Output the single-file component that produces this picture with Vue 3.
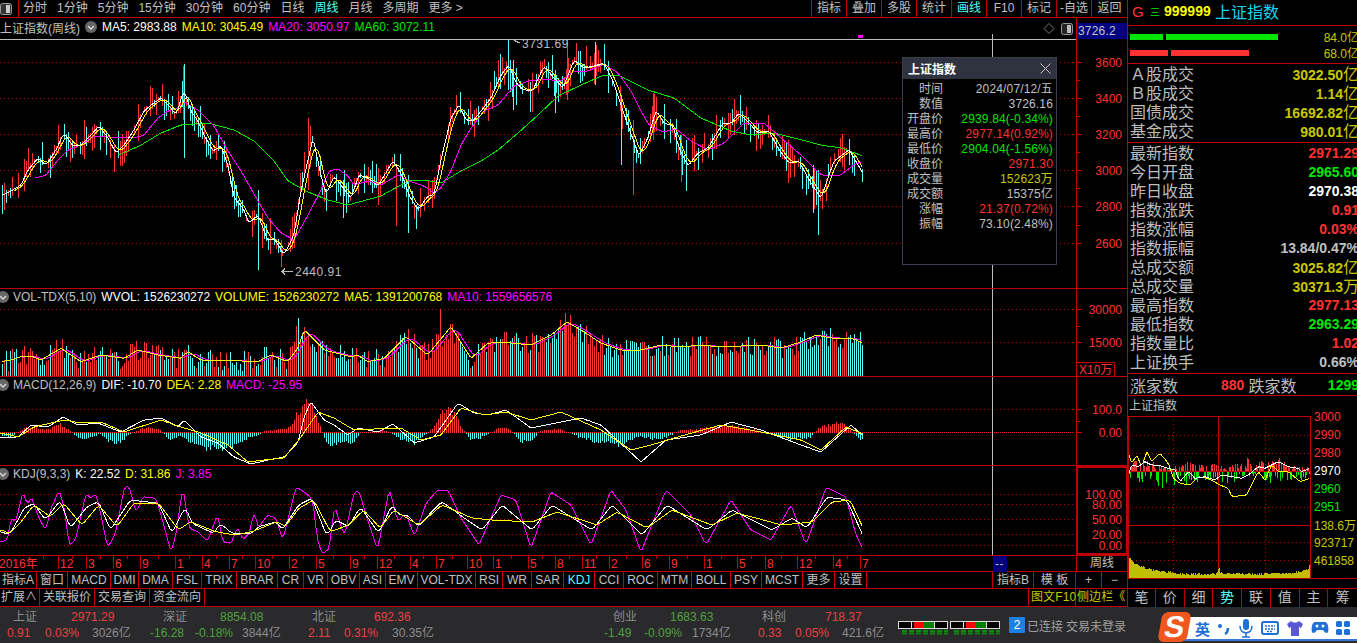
<template>
  <div class="screen">
    <div class="workspace">
      <!-- left: toolbar, chart panes, tabs -->
      <section class="left">
        <div class="toolbar">
          <div class="tool-icon">
            <svg width="12" height="12" viewBox="0 0 12 12"><rect x="0.5" y="0.5" width="11" height="11" rx="2" fill="#333" stroke="#999" /><rect x="6" y="2" width="4" height="8" fill="#ccc" /></svg>
          </div>
          <div class="periods">
            <span v-for="p in periods" :key="p" :class="{ on: p === '周线' }">{{ p }}</span>
          </div>
          <div class="tool-cells">
            <span v-for="t in tools" :key="t" :class="{ on: t === '画线' }">{{ t }}</span>
          </div>
        </div>

        <div class="pane main-pane">
          <svg class="chart" width="1127" height="270" viewBox="0 18 1127 270">
            <path v-for="y in [62, 98, 134, 170, 206, 243]" :key="y" class="dots" :d="`M0 ${y + 0.5}H1074`" />
            <path class="rule" d="M0 39.5H1076" />
            <path class="rule" d="M992.5 34V288" />
            <path class="wick-red" :d="candles.red" />
            <path class="wick-cyan" :d="candles.cyan" />
            <polyline class="ln green" :points="ma60Line" />
            <polyline class="ln magenta" :points="ma20Line" />
            <polyline class="ln yellow" :points="ma10Line" />
            <polyline class="ln white" :points="ma5Line" />
            <rect x="858" y="35" width="5" height="3" fill="#ff00ff" />
            <path class="arrow" d="M293 271.5H282M285 268.5L282 271.5L285 274.5" />
            <text class="note" x="295" y="276">2440.91</text>
            <path class="arrow" d="M520 43L514 40.5M514 40.5L517 39.5" />
            <text class="note" x="522" y="48">3731.69</text>
            <path class="frame" d="M1076.5 18V288M1076 62.5H1082M1076 80.5H1080M1076 98.5H1082M1076 116.5H1080M1076 134.5H1082M1076 152.5H1080M1076 170.5H1082M1076 188.5H1080M1076 206.5H1082M1076 225.5H1080M1076 243.5H1082" />
            <text v-for="l in priceAxis" :key="l.t" class="axis" x="1122" :y="l.y + 4.5">{{ l.t }}</text>
            <path d="M1049 23.5L1054 28.5L1049 33.5L1044 28.5Z" fill="none" stroke="#777" />
            <rect x="1061.5" y="23.5" width="11" height="11" rx="2" fill="#222" stroke="#999" />
            <rect x="1067" y="25" width="4" height="8" fill="#bbb" />
          </svg>
          <div class="legend main-legend">
            <span class="gray">上证指数(周线)</span>
            <svg class="fold" width="12" height="12" viewBox="0 0 12 12"><circle cx="6" cy="6" r="6" fill="#666" /><path d="M3 5L6 8L9 5" fill="none" stroke="#ddd" stroke-width="1.3" /></svg>
            <span class="c-white">MA5: 2983.88</span>
            <span class="c-yellow">MA10: 3045.49</span>
            <span class="c-magenta">MA20: 3050.97</span>
            <span class="c-green">MA60: 3072.11</span>
          </div>
          <div class="price-tag">3726.2</div>

          <div class="tip">
            <div class="tip-head">
              <b>上证指数</b>
              <svg width="11" height="11" viewBox="0 0 11 11"><path d="M0.5 0.5L10.5 10.5M10.5 0.5L0.5 10.5" stroke="#d8b8b8" fill="none" /></svg>
            </div>
            <div class="tip-body">
              <div v-for="r in tipRows" :key="r.k" class="tip-row">
                <span class="tip-k">{{ r.k }}</span>
                <span :class="['tip-v', r.c]">{{ r.v }}</span>
              </div>
            </div>
          </div>
        </div>

        <div class="pane vol-pane">
          <svg class="chart" width="1127" height="87" viewBox="0 289 1127 87">
            <path class="dots" d="M0 309.5H1074M0 342.5H1074" />
            <path class="rule" d="M992.5 289V376" />
            <path class="wick-red" :d="volBars.red" />
            <path class="wick-cyan" :d="volBars.cyan" />
            <polyline class="ln magenta" :points="volMa10" />
            <polyline class="ln yellow" :points="volMa5" />
            <path class="frame" d="M1076.5 289V376M1076 309.5H1082M1076 326.5H1080M1076 342.5H1082" />
            <text class="axis" x="1122" y="314">30000</text>
            <text class="axis" x="1122" y="347">15000</text>
            <rect class="frame" x="1076.5" y="362.5" width="38" height="14" />
            <text class="axis" x="1079" y="374" text-anchor="start">X10万</text>
          </svg>
          <div class="legend sub-legend">
            <svg class="fold" width="12" height="12" viewBox="0 0 12 12"><circle cx="6" cy="6" r="6" fill="#666" /><path d="M3 5L6 8L9 5" fill="none" stroke="#ddd" stroke-width="1.3" /></svg>
            <span class="gray">VOL-TDX(5,10)</span>
            <span class="c-white">WVOL: 1526230272</span>
            <span class="c-yellow">VOLUME: 1526230272</span>
            <span class="c-yellow">MA5: 1391200768</span>
            <span class="c-magenta">MA10: 1559656576</span>
          </div>
        </div>

        <div class="pane macd-pane">
          <svg class="chart" width="1127" height="88" viewBox="0 377 1127 88">
            <path class="dots" d="M0 409.5H1074" />
            <path class="dots bright" d="M0 432.5H1074" />
            <path class="rule" d="M992.5 377V465" />
            <path class="wick-red" :d="macdBars.red" />
            <path class="wick-cyan" :d="macdBars.cyan" />
            <polyline class="ln white" :points="difLine" />
            <polyline class="ln yellow" :points="deaLine" />
            <path class="frame" d="M1076.5 377V465M1076 409.5H1082M1076 421.5H1080M1076 432.5H1082" />
            <text class="axis" x="1122" y="414">100.0</text>
            <text class="axis" x="1122" y="437">0.00</text>
          </svg>
          <div class="legend sub-legend">
            <svg class="fold" width="12" height="12" viewBox="0 0 12 12"><circle cx="6" cy="6" r="6" fill="#666" /><path d="M3 5L6 8L9 5" fill="none" stroke="#ddd" stroke-width="1.3" /></svg>
            <span class="gray">MACD(12,26,9)</span>
            <span class="c-white">DIF: -10.70</span>
            <span class="c-yellow">DEA: 2.28</span>
            <span class="c-magenta">MACD: -25.95</span>
          </div>
        </div>

        <div class="pane kdj-pane">
          <svg class="chart" width="1127" height="89" viewBox="0 466 1127 89">
            <path class="dots" d="M0 494.5H1074M0 504.5H1074M0 519.5H1074M0 534.5H1074M0 545.5H1074" />
            <path class="rule" d="M992.5 466V555" />
            <polyline class="ln magenta" :points="jLine" />
            <polyline class="ln white" :points="kLine" />
            <polyline class="ln yellow" :points="dLine" />
            <rect x="1077" y="467" width="50" height="87" fill="none" stroke="#c00000" stroke-width="2" />
            <text class="axis" x="1122" y="498.5">100.00</text>
            <text class="axis" x="1122" y="509">80.00</text>
            <text class="axis" x="1122" y="524">50.00</text>
            <text class="axis" x="1122" y="539">20.00</text>
            <text class="axis" x="1122" y="549.5">0.00</text>
          </svg>
          <div class="legend sub-legend">
            <svg class="fold" width="12" height="12" viewBox="0 0 12 12"><circle cx="6" cy="6" r="6" fill="#666" /><path d="M3 5L6 8L9 5" fill="none" stroke="#ddd" stroke-width="1.3" /></svg>
            <span class="gray">KDJ(9,3,3)</span>
            <span class="c-white">K: 22.52</span>
            <span class="c-yellow">D: 31.86</span>
            <span class="c-magenta">J: 3.85</span>
          </div>
        </div>

        <div class="time-row">
          <svg width="1076" height="16" viewBox="0 556 1076 16">
            <path class="frame" :d="timeTicks" />
            <text class="axis" x="-1" y="568" text-anchor="start">2016年</text>
            <text v-for="m in months" :key="m[1]" class="axis" :x="m[1] + 2" y="568" text-anchor="start">{{ m[0] }}</text>
            <rect x="993" y="556" width="14" height="16" fill="#000080" />
            <text class="note" x="995" y="568">--</text>
          </svg>
          <span class="cycle">周线</span>
        </div>

        <div class="tab-row">
          <span v-for="t in tabs" :key="t.n" :class="{ on: t.n === 'KDJ' }" :style="{ width: t.w + 'px' }">{{ t.n }}</span>
          <i class="tab-gap"></i>
          <span class="tab-b">指标B</span>
          <span class="tab-m">模 板</span>
          <span class="tab-p">+</span>
          <span class="tab-l">−</span>
        </div>

        <div class="ext-row">
          <span>扩展∧</span>
          <span>关联报价</span>
          <span>交易查询</span>
          <span>资金流向</span>
          <i class="tab-gap"></i>
          <span class="olive">图文F10</span>
          <span class="olive side">侧边栏《</span>
        </div>
      </section>

      <!-- right: quote panel -->
      <aside class="right">
        <div class="q-head">
          <span class="q-g">G</span>
          <span class="q-bars">三</span>
          <b>999999</b>
          <span class="q-name">上证指数</span>
        </div>
        <div class="q-flow">
          <div class="flow-line">
            <i class="bar g1"></i><i class="bar g2"></i><span>84.0亿</span>
          </div>
          <div class="flow-line">
            <i class="bar r1"></i><i class="bar r2"></i><span>68.0亿</span>
          </div>
        </div>
        <div class="q-block first">
          <div v-for="r in amountRows" :key="r.k" class="q-row">
            <span>{{ r.k }}</span><b class="c-olive">{{ r.v }}<em>亿</em></b>
          </div>
        </div>
        <div class="q-block list">
          <div v-for="r in quoteRows" :key="r.k" class="q-row">
            <span>{{ r.k }}</span><b :class="r.c">{{ r.v }}<em v-if="r.u">{{ r.u }}</em></b>
          </div>
        </div>
        <div class="q-count">
          <span>涨家数</span><b class="c-red">880</b><span>跌家数</span><b class="c-green">1299</b>
        </div>
        <div class="q-title">上证指数</div>
        <svg class="mini" width="229" height="173" viewBox="1128 416 229 173">
          <path class="dots" d="M1128 435.5H1310M1128 453.5H1310M1128 489.5H1310M1128 507.5H1310M1128 542.5H1310M1128 560.5H1310M1173.5 416V578M1265.5 416V578" />
          <path class="frame" d="M1128 471.5H1310M1128 525.5H1310M1218.5 416V578" />
          <path class="wick-red" stroke="#ff3232" :d="mini.red" />
          <path class="wick-green" stroke="#00e600" :d="mini.green" />
          <path class="wick-olive" :d="mini.vol" />
          <polyline class="ln yellow" :points="mini.avg" />
          <polyline class="ln white" :points="mini.price" />
          <path class="frame" d="M1128.5 416.5H1310.5V578.5H1128.5ZM1310 578.5H1357M1128 588.5H1357" />
          <text v-for="l in miniAxis" :key="l.t" :class="['mini-label', l.c]" x="1314" :y="l.y + 5">{{ l.t }}</text>
        </svg>
        <div class="q-tabs">
          <span v-for="t in sideTabs" :key="t" :class="{ on: t === '势' }">{{ t }}</span>
        </div>
      </aside>
    </div>

    <!-- bottom status strip -->
    <footer class="status">
      <div class="quotes">
        <div class="quote-line" :style="{ paddingLeft: '13px' }">
          <span v-for="q in statusTop" :key="q.x" :class="q.c" :style="{ width: q.w + 'px' }">{{ q.t }}</span>
        </div>
        <div class="quote-line" :style="{ paddingLeft: '7px' }">
          <span v-for="q in statusBottom" :key="q.x" :class="q.c" :style="{ width: q.w + 'px' }">{{ q.t }}</span>
        </div>
      </div>
      <svg class="meter" width="103" height="14" viewBox="0 0 103 14">
        <g v-for="o in [0, 52]" :key="o" :transform="`translate(${o} 0)`">
          <rect x="0.5" y="0.5" width="49" height="7" fill="#000" stroke="#ddd" />
          <rect x="16" y="1" width="9" height="6" fill="#ff0000" />
          <rect x="25" y="1" width="11" height="6" fill="#008000" />
          <path d="M13.5 0V7M36.5 0V7" stroke="#ddd" />
          <path d="M4 10H50M4 12.5H50" stroke="#0a8a0a" stroke-width="2" stroke-dasharray="5 2" />
        </g>
      </svg>
      <span class="net-badge">2</span>
      <span class="net-text">已连接</span>
      <span class="net-text login">交易未登录</span>
    </footer>

    <!-- input method bar floats over the status strip -->
    <div class="ime">
      <div class="ime-logo"><span>S</span></div>
      <div class="ime-bar">
        <b class="ime-zh">英</b>
        <svg width="14" height="16" viewBox="0 0 14 16"><circle cx="3" cy="6" r="2" fill="#1f6fd6" /><path d="M11 8C11 11 10 13 8 14" stroke="#1f6fd6" stroke-width="2.4" fill="none" /></svg>
        <svg width="16" height="20" viewBox="0 0 16 20"><rect x="5" y="1" width="6" height="11" rx="3" fill="#1f6fd6" /><path d="M2 8C2 17 14 17 14 8M8 15V19M4 19H12" stroke="#1f6fd6" stroke-width="1.6" fill="none" /></svg>
        <svg width="18" height="14" viewBox="0 0 18 14"><rect x="1" y="1" width="16" height="12" rx="2" fill="none" stroke="#1f6fd6" stroke-width="2" /><path d="M4 5H14M4 8H14M6 10.5H12" stroke="#1f6fd6" stroke-width="1.5" stroke-dasharray="2 1" /></svg>
        <svg width="18" height="17" viewBox="0 0 18 17"><path d="M5 1L1 4L3 8L5 7V16H13V7L15 8L17 4L13 1C11 3 7 3 5 1Z" fill="#5b57d6" /></svg>
        <svg width="18" height="14" viewBox="0 0 18 14"><path d="M4 1H14C17 1 18 8 17 11C16 13 14 12 12 9H6C4 12 2 13 1 11C0 8 1 1 4 1Z" fill="#1f6fd6" /><circle cx="6" cy="5" r="1.5" fill="#fff" /><circle cx="12" cy="5" r="1.5" fill="#fff" /></svg>
        <svg width="14" height="14" viewBox="0 0 14 14"><rect width="6" height="6" rx="1.5" fill="#1f6fd6" /><rect x="8" width="6" height="6" rx="1.5" fill="#1f6fd6" /><rect y="8" width="6" height="6" rx="1.5" fill="#1f6fd6" /><rect x="8" y="8" width="6" height="6" rx="1.5" fill="#1f6fd6" /></svg>
      </div>
    </div>
  </div>
</template>

<script setup>
const periods = ["分时", "1分钟", "5分钟", "15分钟", "30分钟", "60分钟", "日线", "周线", "月线", "多周期", "更多 >"];
const tools = ["指标", "叠加", "多股", "统计", "画线", "F10", "标记", "-自选", "返回"];
const sideTabs = ["笔", "价", "细", "势", "联", "值", "主", "筹"];

const priceAxis = [
  { t: "3600", y: 62 }, { t: "3400", y: 98 }, { t: "3200", y: 134 },
  { t: "3000", y: 170 }, { t: "2800", y: 206 }, { t: "2600", y: 243 }
];
const miniAxis = [
  { t: "3000", y: 416, c: "c-red" }, { t: "2990", y: 434, c: "c-red" }, { t: "2980", y: 452, c: "c-red" },
  { t: "2970", y: 470, c: "c-white" }, { t: "2960", y: 488, c: "c-green" }, { t: "2951", y: 506, c: "c-green" },
  { t: "138.6万", y: 525, c: "c-olive" }, { t: "923717", y: 542, c: "c-olive" }, { t: "461858", y: 560, c: "c-olive" }
];

const tipRows = [
  { k: "时间", v: "2024/07/12/五", c: "gray" },
  { k: "数值", v: "3726.16", c: "gray" },
  { k: "开盘价", v: "2939.84(-0.34%)", c: "c-green" },
  { k: "最高价", v: "2977.14(0.92%)", c: "c-red" },
  { k: "最低价", v: "2904.04(-1.56%)", c: "c-green" },
  { k: "收盘价", v: "2971.30", c: "c-red" },
  { k: "成交量", v: "152623万", c: "c-olive" },
  { k: "成交额", v: "15375亿", c: "gray" },
  { k: "涨幅", v: "21.37(0.72%)", c: "c-red" },
  { k: "振幅", v: "73.10(2.48%)", c: "gray" }
];

const amountRows = [
  { k: "Ａ股成交", v: "3022.50" }, { k: "Ｂ股成交", v: "1.14" },
  { k: "国债成交", v: "16692.82" }, { k: "基金成交", v: "980.01" }
];
const quoteRows = [
  { k: "最新指数", v: "2971.29", c: "c-red" },
  { k: "今日开盘", v: "2965.60", c: "c-green" },
  { k: "昨日收盘", v: "2970.38", c: "c-white" },
  { k: "指数涨跌", v: "0.91", c: "c-red" },
  { k: "指数涨幅", v: "0.03%", c: "c-red" },
  { k: "指数振幅", v: "13.84/0.47%", c: "gray" },
  { k: "总成交额", v: "3025.82", u: "亿", c: "c-olive" },
  { k: "总成交量", v: "30371.3", u: "万", c: "c-olive" },
  { k: "最高指数", v: "2977.13", c: "c-red" },
  { k: "最低指数", v: "2963.29", c: "c-green" },
  { k: "指数量比", v: "1.02", c: "c-red" },
  { k: "上证换手", v: "0.66%", c: "gray" }
];

// tab cells, from their right edges
const tabEdges = [
  ["指标A", 37], ["窗口", 68], ["MACD", 111], ["DMI", 139], ["DMA", 173], ["FSL", 202], ["TRIX", 237],
  ["BRAR", 278], ["CR", 304], ["VR", 328], ["OBV", 360], ["ASI", 386], ["EMV", 418], ["VOL-TDX", 476],
  ["RSI", 503], ["WR", 532], ["SAR", 564], ["KDJ", 595], ["CCI", 624], ["ROC", 658], ["MTM", 692],
  ["BOLL", 731], ["PSY", 762], ["MCST", 803], ["更多", 835], ["设置", 867]
];
const tabs = tabEdges.map(([n, end], i) => ({ n, w: end - (i ? tabEdges[i - 1][1] : 0) }));

const months = [
  ["12", 58], ["3", 86], ["6", 113], ["9", 140], ["1", 175], ["4", 202], ["7", 229], ["10", 255], ["2", 289],
  ["5", 316], ["9", 350], ["12", 377], ["4", 410], ["7", 436], ["10", 467], ["1", 493], ["5", 528], ["8", 555],
  ["11", 582], ["2", 609], ["6", 642], ["9", 669], ["1", 704], ["5", 737], ["8", 765], ["12", 797], ["4", 833], ["7", 860]
];
const timeTicks = months
  .map(([, x], i) => {
    const prev = i ? months[i - 1][1] : 28;
    return `M${x + 0.5} 556V569M${Math.round((x + prev) / 2) + 0.5} 556V559`;
  })
  .join("");

// status strip columns: text and left x, cell width runs to the next x
function statusCells(list) {
  return list.map((q, i) => ({
    ...q,
    w: (i + 1 < list.length ? list[i + 1].x : q.x + 50) - q.x
  }));
}
const statusTop = statusCells([
  { x: 13, t: "上证", c: "s-name" }, { x: 71, t: "2971.29", c: "s-up" },
  { x: 163, t: "深证", c: "s-name" }, { x: 220, t: "8854.08", c: "s-down" },
  { x: 312, t: "北证", c: "s-name" }, { x: 374, t: "692.36", c: "s-up" },
  { x: 613, t: "创业", c: "s-name" }, { x: 670, t: "1683.63", c: "s-down" },
  { x: 762, t: "科创", c: "s-name" }, { x: 825, t: "718.37", c: "s-up" }
]);
const statusBottom = statusCells([
  { x: 7, t: "0.91", c: "s-up" }, { x: 45, t: "0.03%", c: "s-up" }, { x: 92, t: "3026亿", c: "s-name" },
  { x: 150, t: "-16.28", c: "s-down" }, { x: 195, t: "-0.18%", c: "s-down" }, { x: 242, t: "3844亿", c: "s-name" },
  { x: 308, t: "2.11", c: "s-up" }, { x: 344, t: "0.31%", c: "s-up" }, { x: 392, t: "30.35亿", c: "s-name" },
  { x: 604, t: "-1.49", c: "s-down" }, { x: 644, t: "-0.09%", c: "s-down" }, { x: 692, t: "1734亿", c: "s-name" },
  { x: 758, t: "0.33", c: "s-up" }, { x: 795, t: "0.05%", c: "s-up" }, { x: 842, t: "421.6亿", c: "s-name" }
]);

/* ---------- chart data, traced from the weekly chart ---------- */
function at(pts, x) {
  if (x <= pts[0][0]) return pts[0][1];
  for (let i = 1; i < pts.length; i++) {
    if (x <= pts[i][0]) {
      const [x0, y0] = pts[i - 1];
      const [x1, y1] = pts[i];
      return y0 + ((y1 - y0) * (x - x0)) / (x1 - x0);
    }
  }
  return pts[pts.length - 1][1];
}

function random(seed) {
  return () => (seed = (seed * 16807) % 2147483647) / 2147483647;
}

// trailing average
function trail(arr, n) {
  return arr.map((_, i) => {
    const s = arr.slice(Math.max(0, i - n + 1), i + 1);
    return s.reduce((a, b) => a + b, 0) / s.length;
  });
}

function line(pts, from, to, smooth = 1) {
  const xs = [];
  for (let x = from; x <= to; x += 2) xs.push(x);
  const ys = trail(xs.map(x => at(pts, x)), smooth);
  return xs.map((x, i) => `${x},${ys[i].toFixed(1)}`).join(" ");
}

// points given in 3x zoom pixels
const z3 = (pts, ox, oy) => pts.map(([x, y]) => [x / 3 + ox, y / 3 + oy]);

const ma5 = [
  [2, 195], [10, 191], [20, 185], [27, 170], [37, 158], [45, 165], [55, 150], [63, 133], [72, 146], [80, 145], [90, 135],
  [98, 126], [107, 138], [115, 153], [123, 145], [133, 130], [143, 111], [150, 105], [160, 98], [170, 108], [175, 115],
  [183, 90], [190, 111], [197, 121], [203, 135], [212, 151], [220, 146], [227, 165], [233, 198], [242, 208], [248, 223],
  [257, 215], [267, 241], [273, 238], [283, 255], [293, 235], [300, 191], [312, 138], [320, 175], [325, 195], [333, 176],
  [350, 198], [358, 175], [367, 178], [377, 186], [392, 161], [400, 173], [408, 195], [417, 210], [427, 196], [433, 195],
  [440, 160], [450, 118], [458, 105], [465, 120], [472, 121], [480, 111], [490, 98], [500, 75], [508, 65], [515, 83],
  [523, 90], [532, 90], [543, 66], [553, 78], [562, 88], [573, 60], [583, 68], [593, 66], [603, 63], [612, 81], [620, 105],
  [628, 128], [638, 156], [647, 138], [655, 110], [663, 123], [672, 126], [678, 148], [687, 166], [697, 153], [707, 148],
  [722, 123], [730, 123], [738, 113], [748, 123], [757, 133], [768, 131], [777, 148], [788, 163], [798, 161], [807, 178],
  [820, 198], [833, 161], [848, 150], [862, 173]
];
const ma20 = [
  [35, 178], [45, 175], [57, 160], [67, 150], [80, 145], [93, 136], [107, 137], [133, 138], [143, 135], [157, 118],
  [167, 111], [177, 108], [183, 102], [197, 110], [213, 126], [227, 151], [240, 171], [257, 201], [267, 218], [280, 233],
  [293, 240], [307, 215], [320, 190], [328, 171], [337, 169], [347, 176], [353, 185], [367, 181], [380, 185], [397, 175],
  [408, 181], [423, 186], [433, 193], [440, 188], [450, 171], [460, 145], [470, 128], [483, 111], [497, 105], [513, 86],
  [528, 81], [543, 79], [560, 81], [573, 71], [587, 71], [603, 64], [617, 73], [630, 91], [640, 111], [648, 125], [662, 132],
  [675, 129], [690, 141], [707, 150], [723, 143], [743, 123], [763, 123], [780, 138], [800, 155], [820, 175], [838, 176],
  [853, 165], [862, 161]
];
const ma60 = [
  [118, 155], [140, 145], [160, 133], [180, 125], [207, 123], [233, 130], [253, 141], [273, 161], [287, 181], [307, 192],
  [327, 200], [347, 205], [380, 196], [407, 181], [423, 180], [440, 183], [460, 171], [480, 161], [497, 150], [517, 133],
  [537, 115], [557, 96], [580, 85], [603, 75], [617, 75], [647, 90], [673, 98], [700, 118], [730, 131], [750, 135], [773, 133],
  [793, 138], [820, 145], [840, 148], [862, 156]
];

const closeX = [];
for (let x = 2; x <= 862; x += 2) closeX.push(x);
const closes = closeX.map(x => at(ma5, x));

const ma5Line = line(ma5, 2, 862, 2);
const ma10Line = trail(closes, 5)
  .map((y, i) => `${closeX[i]},${y.toFixed(1)}`)
  .slice(6)
  .join(" ");
const ma20Line = line(ma20, 35, 862, 2);
const ma60Line = line(ma60, 118, 862, 2);

// long wicks that stand out in the picture: x, top, bottom, red?
const spikes = [
  [183, 66, 120, 1], [184, 64, 158, 0], [258, 190, 270, 0], [281, 240, 267, 1], [308, 118, 190, 1], [396, 170, 226, 1],
  [408, 175, 233, 0], [343, 180, 218, 0], [508, 40, 90, 0], [567, 40, 100, 1], [595, 42, 85, 0], [555, 70, 113, 0],
  [513, 60, 110, 0], [621, 95, 165, 0], [633, 120, 195, 1], [686, 140, 191, 0], [681, 135, 182, 1], [818, 170, 235, 0],
  [813, 165, 213, 0], [740, 95, 125, 0], [734, 99, 125, 1], [653, 93, 140, 1], [788, 140, 183, 1], [849, 139, 165, 0]
];

const rnd = random(7741);
const rising = closes.map((y, i) => {
  const up = i === 0 || y <= closes[i - 1];
  return rnd() < 0.22 ? !up : up;
});

const candles = { red: "", cyan: "" };
closeX.forEach((x, i) => {
  const a = rnd();
  const b = rnd();
  const top = closes[i] - 2 - a * a * 20;
  const bottom = closes[i] + 2 + b * b * 20;
  // thin the wicks out a bit, the white MA5 stays readable
  if (rnd() < 0.8) candles[rising[i] ? "red" : "cyan"] += `M${x + 0.5} ${top.toFixed(0)}V${bottom.toFixed(0)}`;
});
for (const [x, top, bottom, red] of spikes) {
  candles[red ? "red" : "cyan"] += `M${x + 0.5} ${top}V${bottom}`;
}

// volume
const vol5 = [
  ...z3([[0, 245], [30, 240], [60, 230], [90, 228], [120, 240], [180, 205], [210, 225], [240, 245], [300, 225], [370, 235], [410, 210],
    [470, 225], [540, 235], [560, 215], [600, 240], [700, 242], [770, 245], [810, 225], [860, 245], [890, 205], [910, 150], [930, 170],
    [970, 210], [1050, 230], [1070, 225], [1100, 245], [1150, 235], [1215, 170], [1280, 225], [1350, 140], [1410, 235], [1460, 190]], 0, 280),
  [500, 342], [530, 345], [550, 335], [566, 322], [580, 330], [600, 343], [620, 350], [640, 350], [660, 345], [680, 347], [700, 345],
  [720, 347], [740, 346], [760, 345], [780, 348], [800, 342], [815, 335], [830, 338], [850, 338], [862, 343]
];
const volMa5 = line(vol5, 2, 862, 2);
const volMa10 = trail(closeX.map(x => at(vol5, x)), 6)
  .map((y, i) => `${closeX[i]},${y.toFixed(1)}`)
  .slice(10)
  .join(" ");

const volBars = { red: "", cyan: "" };
closeX.forEach((x, i) => {
  const top = Math.min(at(vol5, x) + (rnd() - 0.5) * 22, 372);
  // past the 2021 top the bars are mostly cyan
  const red = rising[i] && !(x > 620 && rnd() < 0.45);
  volBars[red ? "red" : "cyan"] += `M${x + 0.5} ${top.toFixed(0)}V376`;
});
volBars.cyan += "M298.5 318V376";
volBars.red += "M296.5 326V376M440.5 309V376M565.5 313V376";

// MACD
const difPts = [
  [0, 437], [17, 437], [30, 425], [47, 427], [62, 417], [77, 425], [97, 423], [120, 432], [143, 420], [160, 418], [177, 427], [183, 420],
  [200, 437], [217, 443], [233, 457], [250, 464], [267, 460], [283, 457], [297, 443], [303, 417], [310, 402], [323, 420], [333, 425],
  [347, 435], [357, 428], [377, 432], [392, 424], [407, 437], [413, 443], [433, 437], [443, 423], [457, 403], [473, 413], [487, 415],
  [505, 410], [530, 428], [580, 418], [600, 425], [640, 462], [665, 440], [700, 435], [730, 422], [760, 430], [800, 445], [820, 452],
  [850, 425], [862, 436]
];
const deaPts = [
  [0, 433], [17, 437], [33, 427], [63, 420], [80, 423], [100, 422], [123, 432], [160, 420], [180, 427], [200, 433], [227, 445], [247, 462],
  [263, 460], [283, 458], [300, 437], [317, 412], [333, 418], [353, 430], [373, 429], [400, 428], [420, 440], [440, 435], [460, 408],
  [483, 415], [505, 412], [530, 420], [560, 412], [600, 430], [630, 450], [650, 445], [680, 436], [720, 425], [760, 432], [800, 440],
  [820, 450], [845, 427], [862, 434]
];
const difLine = line(difPts, 0, 862, 2);
const deaLine = line(deaPts, 0, 862, 2);

const histPts = [
  [0, -3], [10, -4], [20, 2], [30, 7], [45, 3], [60, 9], [70, 2], [75, -3], [85, -6], [100, -1], [110, -9], [118, -10], [130, -1], [145, 6],
  [160, 3], [170, -7], [180, -3], [190, -9], [205, -15], [230, -16], [245, -6], [258, -2], [265, 2], [285, 4], [293, 13], [303, 30], [310, 36],
  [316, 20], [322, 0], [327, -12], [340, -10], [352, -12], [360, 0], [385, 3], [400, -6], [413, -11], [425, -2], [435, 8], [445, 28], [455, 18],
  [462, 4], [470, -6], [480, -5], [490, 0], [500, 6], [510, 4], [520, -8], [530, -10], [540, 2], [560, 4], [580, -5], [600, -10], [620, -12],
  [640, -3], [660, -8], [680, 3], [700, 4], [730, 8], [760, 2], [790, -7], [810, -4], [820, 6], [840, 12], [855, -2], [862, -7]
];
const macdBars = { red: "", cyan: "" };
closeX.forEach(x => {
  const h = at(histPts, x) * (0.75 + rnd() * 0.45);
  if (h >= 0) macdBars.red += `M${x + 0.5} ${(433 - h).toFixed(0)}V433`;
  else macdBars.cyan += `M${x + 0.5} 433V${(433 - h).toFixed(0)}`;
});

// KDJ
const jPts = [
  ...z3([[0, 230], [20, 225], [30, 160], [45, 170], [65, 80], [80, 120], [92, 95], [110, 150], [125, 180], [135, 195], [150, 130], [175, 75], [190, 130],
    [205, 245], [225, 220], [255, 85], [270, 100], [285, 85], [300, 150], [320, 250], [345, 200], [370, 65], [385, 65], [405, 145], [425, 95],
    [465, 100], [480, 150], [510, 260], [525, 210], [545, 65], [565, 190], [590, 200], [620, 230], [650, 145], [665, 230], [690, 235], [710, 185],
    [725, 225], [745, 205], [760, 135], [770, 190], [800, 150], [825, 160], [845, 225], [885, 65], [915, 85], [935, 105], [950, 230], [965, 268],
    [985, 250], [1000, 120], [1030, 215], [1060, 80], [1075, 80], [1095, 150], [1130, 255], [1165, 70], [1190, 170], [1215, 145], [1240, 215],
    [1275, 115], [1310, 75]], 0, 465),
  [447, 490], [460, 518], [478, 545], [500, 495], [515, 500], [530, 548], [550, 492], [570, 505], [590, 545], [610, 490], [625, 510], [640, 552],
  [665, 490], [690, 515], [705, 545], [730, 500], [750, 530], [770, 540], [790, 505], [805, 545], [825, 487], [845, 497], [855, 535], [862, 549]
];
const kPts = [
  ...z3([[0, 200], [20, 210], [40, 180], [65, 130], [95, 115], [130, 165], [175, 105], [205, 190], [255, 125], [290, 110], [325, 195], [385, 105],
    [430, 110], [470, 115], [510, 205], [550, 125], [570, 175], [635, 205], [655, 175], [690, 205], [750, 205], [770, 185], [825, 170], [840, 195],
    [890, 120], [930, 100], [975, 215], [1000, 165], [1040, 185], [1075, 125], [1130, 205], [1170, 120], [1190, 150], [1215, 150], [1250, 185],
    [1280, 150], [1320, 110]], 0, 465),
  [465, 520], [480, 530], [500, 505], [530, 530], [550, 505], [590, 530], [610, 505], [640, 535], [665, 505], [705, 530], [730, 510], [770, 530],
  [790, 518], [805, 528], [825, 497], [845, 500], [862, 538]
];
const dPts = [
  ...z3([[0, 195], [20, 205], [50, 180], [95, 120], [145, 155], [185, 115], [240, 180], [290, 120], [345, 185], [395, 115], [470, 115], [530, 195],
    [565, 170], [640, 200], [700, 210], [750, 200], [825, 170], [850, 185], [890, 130], [935, 105], [985, 200], [1040, 180], [1085, 135], [1135, 190],
    [1175, 135], [1250, 180], [1320, 120]], 0, 465),
  [470, 518], [490, 520], [530, 522], [555, 512], [595, 525], [615, 512], [645, 528], [670, 510], [710, 525], [735, 513], [780, 525], [810, 522],
  [830, 502], [848, 500], [862, 530]
];
const jLine = line(jPts, 0, 862, 2);
const kLine = line(kPts, 0, 862, 3);
const dLine = line(dPts, 0, 862, 3);

// intraday mini chart
const miniPrice = z3([[10, 225], [20, 195], [40, 200], [60, 185], [80, 195], [100, 195], [130, 205], [150, 210], [165, 245], [190, 215], [210, 235], [240, 230],
  [270, 240], [290, 225], [320, 230], [350, 235], [370, 225], [400, 200], [420, 205], [460, 185], [490, 200], [520, 205], [530, 215], [555, 205]], 1125, 400);
const miniAvg = z3([[10, 160], [20, 190], [35, 165], [50, 200], [65, 155], [80, 185], [105, 160], [130, 190], [145, 235], [165, 250], [195, 255], [220, 230],
  [250, 235], [285, 255], [310, 265], [320, 290], [365, 285], [385, 245], [400, 215], [420, 240], [440, 195], [460, 215], [490, 215], [525, 245], [555, 235]], 1125, 400);
const miniUp = z3([[10, 30], [60, 36], [130, 9], [170, 27], [220, 30], [300, 15], [350, 24], [375, 54], [395, 39], [440, 30], [460, 45], [500, 18], [555, 12]], 1125, 0);
const miniDown = z3([[10, 15], [50, 45], [130, 54], [190, 36], [260, 27], [320, 36], [350, 24], [400, 9], [430, 36], [480, 36], [520, 30], [555, 9]], 1125, 0);
const miniVol = z3([[8, 385], [11, 385], [12, 470], [25, 490], [50, 500], [80, 510], [120, 515], [145, 518], [170, 522], [270, 522], [282, 505], [285, 520],
  [400, 522], [500, 520], [530, 513], [550, 508], [553, 483], [556, 483]], 1125, 400);

const mini = { red: "", green: "", vol: "" };
const rm = random(2201);
for (let x = 1129; x < 1310; x++) {
  rm();
  const r = rm();
  if (r < 0.5) mini.red += `M${x + 0.5} ${(471 - at(miniUp, x) * (0.25 + rm() * 0.75)).toFixed(0)}V471`;
  else mini.green += `M${x + 0.5} 472V${(472 + at(miniDown, x) * (0.25 + rm() * 0.75)).toFixed(0)}`;
}
for (let x = 1128; x < 1310; x++) {
  mini.vol += `M${x + 0.5} ${(at(miniVol, x) + rm() * 2 - 1).toFixed(0)}V578`;
}
const xyLine = pts => {
  let s = "";
  for (let x = Math.ceil(pts[0][0]); x <= 1310; x += 2) s += `${x},${at(pts, x).toFixed(1)} `;
  return s;
};
mini.price = xyLine(miniPrice);
mini.avg = xyLine(miniAvg);
</script>

<style scoped>
.screen {
  --line: #c00000;
  position: relative;
  width: 1357px;
  height: 643px;
  overflow: hidden;
  background: #000;
  color: #c0c0c0;
  font-family: "Liberation Sans", "Noto Sans CJK SC", sans-serif;
  font-size: 12px;
}
.workspace {
  display: flex;
  height: 607px;
}
.left {
  width: 1128px;
  flex: none;
  border-right: 1px solid var(--line);
  box-sizing: border-box;
}

/* colours */
.gray { color: #c0c0c0; }
.c-white { color: #fff; }
.c-yellow { color: #ffff00; }
.c-magenta { color: #ff00ff; }
.c-green { color: #00e600; }
.c-red { color: #ff3232; }
.c-olive { color: #c8c800; }

/* top toolbar */
.toolbar {
  display: flex;
  height: 18px;
  box-sizing: border-box;
  border-bottom: 1px solid var(--line);
  line-height: 17px;
}
.tool-icon {
  width: 19px;
  flex: none;
  box-sizing: border-box;
  border-right: 1px solid var(--line);
  display: flex;
  align-items: center;
}
.periods {
  display: flex;
  gap: 10px;
  padding-left: 4px;
  white-space: nowrap;
}
.on { color: #54ffff !important; }
.tool-cells {
  display: flex;
  margin-left: auto;
}
.tool-cells span {
  width: 35px;
  box-sizing: border-box;
  border-left: 1px solid var(--line);
  text-align: center;
}
.tool-cells span:last-child { width: 36px; }

/* chart panes */
.pane {
  position: relative;
  box-sizing: border-box;
  border-bottom: 1px solid var(--line);
}
.main-pane { height: 271px; }
.vol-pane { height: 88px; }
.macd-pane { height: 89px; }
.kdj-pane { height: 90px; }
.chart {
  display: block;
  overflow: hidden;
}
.dots {
  fill: none;
  stroke: #c00000;
  stroke-dasharray: 1 3;
  shape-rendering: crispEdges;
}
.dots.bright { stroke: #ff2020; stroke-dasharray: 1 1; }
.rule {
  stroke: #bdbdbd;
  fill: none;
  shape-rendering: crispEdges;
}
.frame {
  fill: none;
  stroke: var(--line);
  shape-rendering: crispEdges;
}
.wick-red, .wick-cyan, .wick-green, .wick-olive {
  fill: none;
  shape-rendering: crispEdges;
}
.wick-red { stroke: #ff3232; }
.wick-cyan { stroke: #54ffff; }
.wick-green { stroke: #00e600; }
.wick-olive { stroke: #bfbf00; }
.ln {
  fill: none;
  stroke-width: 1;
  shape-rendering: crispEdges;
}
.ln.white { stroke: #fff; }
.ln.yellow { stroke: #ffff00; }
.ln.magenta { stroke: #ff00ff; }
.ln.green { stroke: #00e600; }
.arrow {
  fill: none;
  stroke: #bdbdbd;
  shape-rendering: crispEdges;
}
.note {
  fill: #bdbdbd;
  font-size: 12px;
  letter-spacing: 0.5px;
}
.axis {
  fill: #ff3232;
  font-size: 12px;
  text-anchor: end;
}
.axis[text-anchor="start"] { text-anchor: start; }
.legend {
  position: absolute;
  left: 0;
  top: 0;
  display: flex;
  align-items: center;
  gap: 5px;
  white-space: nowrap;
}
.main-legend { height: 18px; }
.sub-legend { height: 16px; left: -3px; }
.sub-legend .gray { margin-left: -1px; }
.kdj-pane .sub-legend { height: 15px; }
.fold { flex: none; }
.price-tag {
  position: absolute;
  left: 1077px;
  top: 5px;
  width: 50px;
  height: 16px;
  background: #000080;
  color: #c8c8c8;
  line-height: 16px;
  padding-left: 1px;
  box-sizing: border-box;
  letter-spacing: 0.2px;
}

/* floating data window */
.tip {
  position: absolute;
  left: 902px;
  top: 39px;
  width: 155px;
  height: 208px;
  box-sizing: border-box;
  border: 1px solid #3a3f4b;
  background: #000;
}
.tip-head {
  height: 21px;
  background: #2e333f;
  display: flex;
  align-items: center;
  justify-content: space-between;
  padding: 0 5px;
  color: #fff;
  font-size: 12px;
}
.tip-head b { font-weight: 700; }
.tip-body { padding-top: 3px; }
.tip-row {
  display: flex;
  justify-content: space-between;
  height: 15px;
  line-height: 15px;
  padding: 0 3px 0 0;
}
.tip-k {
  width: 40px;
  text-align: right;
}
.tip-v { letter-spacing: 0.15px; }

/* time axis and tab rows */
.time-row {
  display: flex;
  height: 16px;
  box-sizing: border-box;
  border-bottom: 1px solid var(--line);
}
.time-row svg { display: block; flex: none; }
.cycle {
  flex: 1;
  text-align: center;
  line-height: 15px;
  border-left: 1px solid var(--line);
}
.tab-row, .ext-row {
  display: flex;
  box-sizing: border-box;
  border-bottom: 1px solid var(--line);
  white-space: nowrap;
}
.tab-row { height: 17px; line-height: 16px; }
.ext-row { height: 18px; line-height: 17px; }
.tab-row span {
  flex: none;
  box-sizing: border-box;
  text-align: center;
  border-right: 1px solid var(--line);
  overflow: hidden;
}
.tab-gap {
  flex: 1;
  border-right: 1px solid var(--line);
}
.tab-row .tab-b { width: 41px; }
.tab-row .tab-m { width: 42px; }
.tab-row .tab-p { width: 26px; }
.tab-row .tab-l { width: 25px; border-right: 0; }
.ext-row span {
  padding: 0 3px;
  border-right: 1px solid var(--line);
}
.ext-row span:first-child { padding: 0 2px 0 1px; }
.ext-row .olive {
  color: #c8c800;
  padding: 0 2px;
  width: 47px;
  box-sizing: border-box;
  letter-spacing: 0.1px;
}
.ext-row .side {
  width: 51px;
  border-right: 0;
  overflow: hidden;
  padding: 0 0 0 1px;
}

/* quote panel */
.right {
  width: 229px;
  flex: none;
  overflow: hidden;
}
.q-head {
  display: flex;
  align-items: center;
  height: 26px;
  box-sizing: border-box;
  border-bottom: 1px solid var(--line);
  padding: 0 0 3px 4px;
  white-space: nowrap;
}
.q-g { color: #ff3232; font-size: 15px; width: 18px; }
.q-bars { color: #00e600; font-size: 10px; width: 14px; }
.q-head b { color: #ffff00; font-size: 14px; width: 51px; }
.q-name { color: #19d3f0; font-size: 16px; }
.q-flow {
  height: 38px;
  box-sizing: border-box;
  border-bottom: 1px solid var(--line);
  padding: 2px 0 0 2px;
}
.flow-line {
  position: relative;
  display: flex;
  align-items: center;
  gap: 3px;
  height: 15px;
  margin-top: 1px;
  color: #c8c800;
}
.flow-line span {
  margin-left: auto;
  margin-right: -2px;
}
.bar { display: block; height: 6px; }
.g1 { width: 33px; background: #00e600; }
.g2 { width: 112px; background: #00e600; }
.r1 { width: 38px; background: #ff3232; }
.r2 { width: 78px; background: #ff3232; }
.q-block {
  box-sizing: border-box;
  border-bottom: 1px solid var(--line);
  padding-top: 1px;
}
.q-block.first { height: 79px; }
.q-block.list { height: 231px; }
.q-row {
  display: flex;
  justify-content: space-between;
  height: 19px;
  line-height: 19px;
  padding-left: 2px;
  margin-right: -2px;
  white-space: nowrap;
}
.q-row span { font-size: 16px; color: #bdbdbd; }
.q-row b { font-size: 14px; }
.q-row em {
  font-style: normal;
  font-weight: 400;
  font-size: 16px;
}
.q-count {
  display: flex;
  align-items: center;
  height: 22px;
  box-sizing: border-box;
  border-bottom: 1px solid var(--line);
  padding-left: 2px;
  font-size: 16px;
  color: #bdbdbd;
}
.q-count b { font-size: 14px; }
.q-count b.c-red { margin-left: 43px; margin-right: 4px; }
.q-count b.c-green { margin-left: auto; margin-right: -2px; }
.q-title {
  height: 20px;
  line-height: 20px;
  padding-left: 1px;
}
.mini {
  display: block;
  overflow: visible;
}
.mini-label { font-size: 12px; }
.mini-label.c-red { fill: #ff3232; }
.mini-label.c-white { fill: #fff; }
.mini-label.c-green { fill: #00e600; }
.mini-label.c-olive { fill: #c8c800; }
.q-tabs {
  display: flex;
  height: 18px;
  line-height: 17px;
  font-size: 14px;
}
.q-tabs span {
  width: 29px;
  box-sizing: border-box;
  text-align: center;
  border-right: 1px solid var(--line);
}
.q-tabs span:first-child { width: 28px; }
.q-tabs span:last-child { border-right: 0; }

/* bottom status strip */
.status {
  display: flex;
  align-items: center;
  height: 36px;
  background: #2a2a2c;
  white-space: nowrap;
}
.quotes { width: 898px; flex: none; }
.quote-line {
  display: flex;
  height: 15px;
  line-height: 15px;
  margin-top: 1px;
}
.quote-line span { flex: none; }
.s-name { color: #8c8c8c; }
.s-up { color: #e84040; }
.s-down { color: #4ea03c; }
.meter { flex: none; margin-top: 6px; }
.net-badge {
  flex: none;
  width: 16px;
  height: 16px;
  margin-left: 8px;
  background: #2080e0;
  color: #fff;
  text-align: center;
  line-height: 16px;
  border-radius: 1px;
}
.net-text { color: #a0a0a0; margin-left: 2px; }
.net-text.login { margin-left: 3px; }

/* input method bar */
.ime {
  position: absolute;
  left: 1157px;
  top: 612px;
  width: 200px;
  height: 30px;
}
.ime-logo {
  position: absolute;
  left: 3px;
  top: 0;
  z-index: 1;
  width: 29px;
  height: 30px;
  background: #f0561d;
  border-radius: 6px;
  transform: skewX(-10deg);
  text-align: center;
}
.ime-logo span {
  display: block;
  color: #fff;
  font-size: 30px;
  font-weight: 700;
  line-height: 30px;
}
.ime-bar {
  position: absolute;
  left: 24px;
  right: 0;
  top: 5px;
  height: 24px;
  box-sizing: border-box;
  background: #fff;
  border-bottom: 2px solid #3a78d8;
  display: flex;
  align-items: center;
  gap: 7px;
  padding-left: 14px;
}
.ime-zh {
  color: #1f6fd6;
  font-size: 15px;
}
</style>

<style>
html, body {
  margin: 0;
  background: #000;
}
</style>
